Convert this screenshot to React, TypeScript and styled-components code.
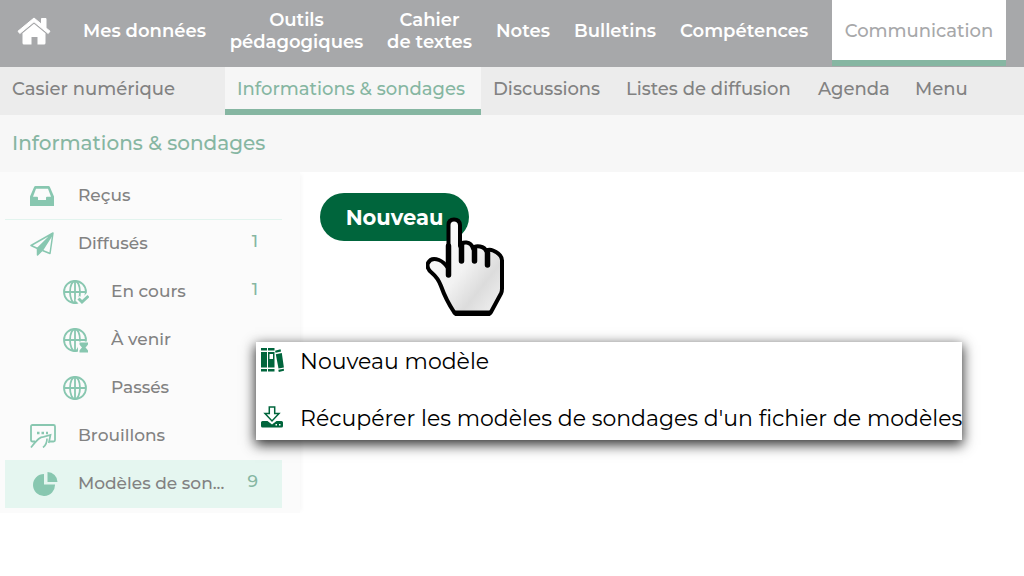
import React from "react";
import styled, { createGlobalStyle } from "styled-components";

const color = {
  bar: "#a7a8aa",
  accent: "#86b6a2",
  icon: "#88c7b0",
  text: "#828282",
  brand: "#00653c",
};

const GlobalStyle = createGlobalStyle`
  * { box-sizing: border-box; }
  body {
    margin: 0;
    background: #fff;
    font-family: Montserrat, Inter, "Liberation Sans", sans-serif;
  }
  a { text-decoration: none; color: inherit; }
  ul { list-style: none; margin: 0; padding: 0; }
  button { font-family: inherit; border: 0; cursor: pointer; }
  svg { display: block; }
`;

const Page = styled.div`
  position: relative;
  min-height: 100vh;
`;

const TopNav = styled.nav`
  display: grid;
  grid-template-columns: 71fr 147fr 157fr 109fr 78fr 106fr 164fr 174fr 18fr;
  height: 67px;
  background: ${color.bar};
`;

const HomeLink = styled.a`
  display: flex;
  align-items: center;
  padding: 0 0 6px 17px;
`;

const TopLink = styled.a<{ $active?: boolean; $start?: boolean }>`
  display: flex;
  align-items: center;
  justify-content: ${(p) => (p.$start ? "flex-start" : "center")};
  padding: ${(p) => (p.$start ? "0 12px" : p.$active ? "2px 0 0" : "0")};
  height: ${(p) => (p.$active ? "66px" : "62px")};
  border-bottom: ${(p) => (p.$active ? `6px solid ${color.accent}` : "0")};
  background: ${(p) => (p.$active ? "#fff" : "transparent")};
  color: ${(p) => (p.$active ? color.bar : "#fff")};
  font-size: 18px;
  line-height: 22px;
  font-weight: ${(p) => (p.$active ? 500 : 600)};
  text-align: center;
  white-space: nowrap;
`;

const SubNav = styled.nav`
  display: grid;
  grid-template-columns: 225fr 256fr 133fr 192fr 97fr 121fr;
  height: 48px;
  background: #ececec;
`;

const SubLink = styled.a<{ $active?: boolean }>`
  padding: 10px 0 0 12px;
  border-bottom: ${(p) => (p.$active ? `6px solid ${color.accent}` : "0")};
  background: ${(p) => (p.$active ? "#f6f6f6" : "transparent")};
  color: ${(p) => (p.$active ? color.accent : color.text)};
  font-size: 18px;
  line-height: 24px;
  font-weight: 500;
  white-space: nowrap;
`;

const Title = styled.h1`
  margin: 0;
  padding: 16px 12px 17px;
  background: #f7f7f7;
  color: ${color.accent};
  font-size: 20px;
  line-height: 24px;
  font-weight: 500;
`;

const Body = styled.div`
  display: flex;
  align-items: flex-start;
`;

const Sidebar = styled.aside`
  flex: 0 0 300px;
  padding: 0 18px 5px 5px;
  background: #fbfbfb;
  box-shadow: 4px 0 4px -2px rgba(0, 0, 0, 0.03);
`;

const Item = styled.a<{ $nested?: boolean; $active?: boolean; $ruled?: boolean }>`
  display: flex;
  align-items: center;
  height: 48px;
  padding: 0 24px 0 ${(p) => (p.$nested ? "58px" : "25px")};
  border-bottom: ${(p) => (p.$ruled ? "1px solid #e2f4ee" : "0")};
  background: ${(p) => (p.$active ? "#e5f6f0" : "transparent")};
  color: ${color.text};
  font-size: 17px;
  line-height: 24px;
  font-weight: 500;
  white-space: nowrap;
`;

const ItemIcon = styled.span`
  flex: 0 0 48px;
  color: ${color.icon};
`;

const ItemLabel = styled.span`
  max-width: 148px;
  padding-bottom: 2px;
  overflow: hidden;
  text-overflow: ellipsis;
`;

const Count = styled.span`
  margin-left: auto;
  padding-bottom: 6px;
  color: ${color.accent};
`;

const Workspace = styled.main`
  flex: 1;
  padding: 21px 20px;
`;

const ButtonHolder = styled.div`
  position: relative;
  width: max-content;
`;

const NewButton = styled.button`
  min-width: 149px;
  height: 48px;
  padding: 2px 0 0;
  border-radius: 24px;
  background: ${color.brand};
  color: #fff;
  font-size: 21px;
  line-height: 24px;
  font-weight: 700;
`;

const Pointer = styled.svg`
  position: absolute;
  left: 106px;
  top: 23px;
  pointer-events: none;
`;

const Menu = styled.div`
  position: absolute;
  left: 256px;
  top: 342px;
  min-width: 705px;
  display: flex;
  flex-direction: column;
  gap: 19px;
  padding-bottom: 3px;
  background: #fff;
  box-shadow: 0 4px 12px 1px rgba(0, 0, 0, 0.8);
`;

const MenuButton = styled.button`
  display: flex;
  align-items: center;
  height: 38px;
  padding: 0 0 0 4px;
  background: transparent;
  color: #000;
  font-size: 22px;
  line-height: 28px;
  text-align: left;
  white-space: nowrap;
`;

const MenuIcon = styled.span`
  flex: 0 0 40px;
  padding-bottom: 2px;
  color: ${color.brand};
`;

const MenuLabel = styled.span`
  padding-top: 2px;
`;

const HomeIcon = () => (
  <svg width="34" height="28" viewBox="0 0 34 28" fill="#fff" role="img" aria-label="Accueil">
    <path d="M17 1 1 14.2l1.8 2.3L17 4.8l14.2 11.7 1.8-2.3-4-3.3V1.5h-4.5v5.7z" stroke="#fff" strokeLinejoin="round" />
    <path d="M5.500 16.300 17 6.800l11.500 9.500V26q0 1.500-1.500 1.500h-6.500V20h-6v7.500H7q-1.500 0-1.500-1.500z" />
  </svg>
);

const InboxIcon = () => (
  <svg width="24" height="20" viewBox="0 0 24 20" fill="currentColor">
    <path fillRule="evenodd" d="M5.500 0h13q1 0 1.400 1L24 10.500V20H0V10.500L4.100 1Q4.500 0 5.500 0zM6 2.800 3 10.800h4q1 0 1 1v2.200h8v-2.200q0-1 1-1h4L18 2.800z" />
  </svg>
);

const PlaneIcon = () => (
  <svg width="24" height="24" viewBox="0 0 24 24" fill="none" stroke="currentColor" strokeWidth="1.500" strokeLinejoin="round">
    <path d="M23 1 1 13.500l6.500 3L23 1l-3 20.500-7.500-3" />
    <path d="M22 3 7.500 16.500V23l5-5z" fill="currentColor" />
  </svg>
);

const Globe = ({ badge }: { badge?: "check" | "hourglass" }) => (
  <svg width="26" height="26" viewBox="0 0 26 26" fill="none" stroke="currentColor" strokeWidth="1.800">
    <circle cx="12" cy="13" r="11" />
    <ellipse cx="12" cy="13" rx="5" ry="11" />
    <path d="M12 2v22M1 13h22" />
    {badge === "check" && (
      <>
        <path d="m14.500 19 4 4.500 7.500-7.500" stroke="#fbfbfb" strokeWidth="6" />
        <path d="m15.500 19.500 3.500 3.500 6.500-6" strokeWidth="3" />
      </>
    )}
    {badge === "hourglass" && (
      <>
        <path d="M15 14.500H26V26H15z" fill="#fbfbfb" stroke="none" />
        <path d="M16.500 15.500h8.500v2q-1 1.500-2.500 3 1.500 1.500 2.500 3v2h-8.500v-2q1-1.500 2.500-3-1.500-1.500-2.500-3z" fill="currentColor" stroke="none" />
      </>
    )}
  </svg>
);

const DraftIcon = () => (
  <svg width="27" height="24" viewBox="0 0 27 24" fill="none" stroke="currentColor" strokeWidth="1.800">
    <path d="M5 17.500H2.500Q1 17.500 1 16V2.500Q1 1 2.500 1h21Q25 1 25 2.500V16q0 1.500-1.500 1.500H20" />
    <path d="M1 23.500q4-5.500 7.500-8.500 2.500-2.200 5-2.200L20.500 11l-1.700 8M17 14.500q0 6-4 9" strokeWidth="1.700" />
    <path d="M7 9h2.500M11.500 9H14M16 9h2" strokeWidth="2.300" />
  </svg>
);

const PieIcon = () => (
  <svg width="28" height="24" viewBox="0 0 28 24" fill="currentColor">
    <path d="M14 2v10.500h11A11 11 0 1 1 14 2z" />
    <path d="M17.500 0A10 10 0 0 1 27.500 10H17.500z" />
  </svg>
);

const BooksIcon = () => (
  <svg width="24" height="24" viewBox="0 0 24 24" fill="currentColor">
    <path d="M1 0h6v2.500H1zM1 4h6v15.500H1zM1 21h6v2.500H1zM8 0h6.500v2.500H8zM8 21h6.500v2.500H8z" />
    <path fillRule="evenodd" d="M8 4h6.500v15.500H8zM9.500 6v5H13V6z" />
    <path d="m15 2.700 5.500-1.400.6 2.300-5.500 1.200zM15.800 6.300l6-1.200 2.100 14.400-5.400 1zM18.300 21.800l5.500-1 .2 2-5.200 1.200z" />
  </svg>
);

const ImportIcon = () => (
  <svg width="24" height="22" viewBox="0 0 24 22">
    <path fill="currentColor" d="M2.500 15h5l4.500 3.500 4.500-3.500h5q1.500 0 1.500 1.500V20q0 1.500-1.500 1.500h-19Q1 21.500 1 20v-3.500Q1 15 2.500 15z" />
    <path fill="#fff" stroke="currentColor" strokeWidth="1.500" d="M9.300 1h5.400v6.500H19L12 15 5 7.500h4.300z" />
    <path fill="#fff" d="M15.500 18H17v1.500h-1.500zM19 18h1.500v1.500H19z" />
  </svg>
);

const HandPointer = () => (
  <Pointer width="79" height="101" viewBox="0 0 79 101" aria-hidden="true">
    <defs>
      <linearGradient id="hand" x1="0" y1="0" x2="1" y2="1">
        <stop offset="0" stopColor="#fff" />
        <stop offset="0.500" stopColor="#f2f2f2" />
        <stop offset="0.720" stopColor="#dcdcdc" />
        <stop offset="1" stopColor="#f4f4f4" />
      </linearGradient>
    </defs>
    <path
      d="M22.500 54V9Q22.500 3.500 28 3.500T34 9v21q1-4 6.500-3.500 5 .5 6.500 6 2-3 7-2 5 1 6 4.500 3-2 7-.5 9 4 9 10v28q0 3-1 5L65 96q-1 2-3 2H31q-2 0-3-2Q20 84 15 70 12 62 6 57q-6-5-4-10 3-6 11-3 5 2 9 8z"
      fill="url(#hand)" stroke="#000" strokeWidth="4" strokeLinejoin="round"
    />
    <path d="M22.500 30v29M35.500 29v16M48.500 33v12M61.500 37v12" stroke="#000" strokeWidth="5.500" strokeLinecap="round" />
    <path d="M29 97h35" stroke="#000" strokeWidth="5" />
  </Pointer>
);

export default function App() {
  return (
    <Page>
      <GlobalStyle />
      <TopNav aria-label="Navigation principale">
        <HomeLink href="#"><HomeIcon /></HomeLink>
        <TopLink href="#" $start>Mes données</TopLink>
        <TopLink href="#">Outils<br />pédagogiques</TopLink>
        <TopLink href="#">Cahier<br />de textes</TopLink>
        <TopLink href="#">Notes</TopLink>
        <TopLink href="#">Bulletins</TopLink>
        <TopLink href="#" $start>Compétences</TopLink>
        <TopLink href="#" $active>Communication</TopLink>
      </TopNav>
      <SubNav aria-label="Communication">
        <SubLink href="#">Casier numérique</SubLink>
        <SubLink href="#" $active>Informations &amp; sondages</SubLink>
        <SubLink href="#">Discussions</SubLink>
        <SubLink href="#">Listes de diffusion</SubLink>
        <SubLink href="#">Agenda</SubLink>
        <SubLink href="#">Menu</SubLink>
      </SubNav>
      <Title>Informations &amp; sondages</Title>
      <Body>
        <Sidebar>
          <ul>
            <li><Item href="#" $ruled><ItemIcon><InboxIcon /></ItemIcon><ItemLabel>Reçus</ItemLabel></Item></li>
            <li><Item href="#"><ItemIcon><PlaneIcon /></ItemIcon><ItemLabel>Diffusés</ItemLabel><Count>1</Count></Item></li>
            <li><Item href="#" $nested><ItemIcon><Globe badge="check" /></ItemIcon><ItemLabel>En cours</ItemLabel><Count>1</Count></Item></li>
            <li><Item href="#" $nested><ItemIcon><Globe badge="hourglass" /></ItemIcon><ItemLabel>À venir</ItemLabel></Item></li>
            <li><Item href="#" $nested><ItemIcon><Globe /></ItemIcon><ItemLabel>Passés</ItemLabel></Item></li>
            <li><Item href="#"><ItemIcon><DraftIcon /></ItemIcon><ItemLabel>Brouillons</ItemLabel></Item></li>
            <li><Item href="#" $active><ItemIcon><PieIcon /></ItemIcon><ItemLabel>Modèles de son...</ItemLabel><Count>9</Count></Item></li>
          </ul>
        </Sidebar>
        <Workspace>
          <ButtonHolder>
            <NewButton type="button">Nouveau</NewButton>
            <HandPointer />
          </ButtonHolder>
        </Workspace>
      </Body>
      <Menu>
        <MenuButton type="button"><MenuIcon><BooksIcon /></MenuIcon><MenuLabel>Nouveau modèle</MenuLabel></MenuButton>
        <MenuButton type="button"><MenuIcon><ImportIcon /></MenuIcon><MenuLabel>Récupérer les modèles de sondages d'un fichier de modèles</MenuLabel></MenuButton>
      </Menu>
    </Page>
  );
}
